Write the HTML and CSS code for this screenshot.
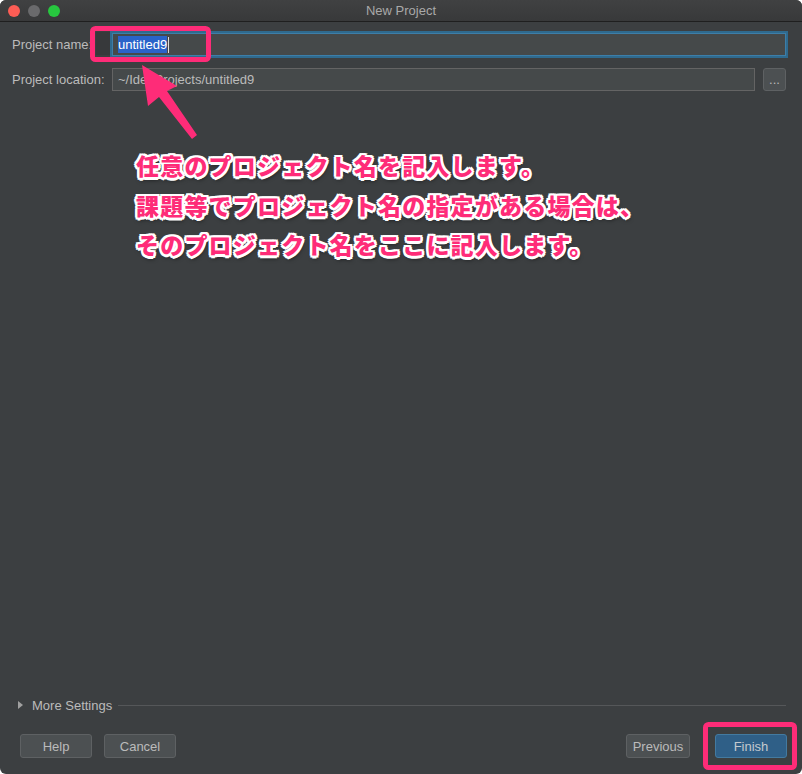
FILE: index.html
```html
<!DOCTYPE html>
<html lang="ja">
<head>
<meta charset="utf-8">
<title>New Project</title>
<link rel="stylesheet" href="styles.css">
</head>
<body>
<div class="window">
  <div class="titlebar">
    <div class="lights">
      <span class="light red"></span>
      <span class="light gray"></span>
      <span class="light green"></span>
    </div>
    <div class="title">New Project</div>
  </div>
  <div class="content">
    <div class="form">
      <label class="label">Project name:</label>
      <div class="field focused"><span class="sel">untitled9</span><span class="caret"></span></div>
      <label class="label">Project location:</label>
      <div class="loc-row">
        <div class="field">~/IdeaProjects/untitled9</div>
        <button class="browse">...</button>
      </div>
    </div>
    <div class="spacer"></div>
    <div class="more">
      <span class="tri"></span>
      <span class="more-text">More Settings</span>
      <span class="rule"></span>
    </div>
    <div class="buttons">
      <div class="group left">
        <button class="btn">Help</button>
        <button class="btn">Cancel</button>
      </div>
      <div class="group right">
        <button class="btn prev">Previous</button>
        <button class="btn primary">Finish</button>
      </div>
    </div>
  </div>
  <svg class="overlay" width="802" height="774" viewBox="0 0 802 774">
    <rect x="96" y="32" width="14" height="23" fill="#37393b"/>
    <rect x="92.5" y="28.5" width="116" height="31" rx="3" fill="none" stroke="#fe2c78" stroke-width="5"/>
    <rect x="705.5" y="724.5" width="89" height="43" rx="3" fill="none" stroke="#fe2c78" stroke-width="5"/>
    <polygon points="142,65 177,86 167,91 197,135 192,139 159,97 148,106" fill="#fe2c78"/>
  </svg>
  <div class="note">
    <p>任意のプロジェクト名を記入します。</p>
    <p>課題等でプロジェクト名の指定がある場合は、</p>
    <p>そのプロジェクト名をここに記入します。</p>
  </div>
</div>
</body>
</html>
```

FILE: styles.css
```css
* { box-sizing: border-box; }
html, body {
  margin: 0;
  padding: 0;
  background: #ffffff;
}
body {
  font-family: "Liberation Sans", Arial, sans-serif;
  font-size: 13px;
  color: #bbbbbb;
}
.window {
  position: relative;
  width: 802px;
  height: 774px;
  background: #3c3f41;
  border-radius: 6px;
  overflow: hidden;
  display: flex;
  flex-direction: column;
}
.titlebar {
  position: relative;
  height: 22px;
  flex: none;
  background: linear-gradient(#404142, #38393a);
  border-bottom: 1px solid #1f1f1f;
  display: flex;
  align-items: center;
}
.lights {
  display: flex;
  gap: 8px;
  padding-left: 8px;
}
.light {
  width: 12px;
  height: 12px;
  border-radius: 50%;
  display: block;
}
.red { background: #fd5d55; }
.gray { background: #6a6a6c; }
.green { background: #27c73f; }
.title {
  position: absolute;
  left: 0;
  right: 0;
  text-align: center;
  color: #a9a9a9;
  font-size: 13px;
  line-height: 22px;
}
.content {
  flex: 1;
  display: flex;
  flex-direction: column;
  padding: 11px 16px 16px 12px;
}
.form {
  display: grid;
  grid-template-columns: 100px 1fr;
  row-gap: 12px;
  align-items: center;
}
.label {
  font-size: 13px;
  color: #bbbbbb;
  white-space: nowrap;
}
.field {
  height: 23px;
  background: #45494a;
  border: 1px solid #646464;
  display: flex;
  align-items: center;
  padding-left: 5px;
  color: #bbbbbb;
  font-size: 13px;
}
.field.focused {
  border: 1px solid #3d7ea8;
  box-shadow: 0 0 0 2px #2f6a8e;
}
.sel {
  background: #2a63c9;
  color: #ffffff;
  line-height: 17px;
}
.caret {
  width: 1px;
  height: 16px;
  background: #dddddd;
  margin-left: 1px;
}
.loc-row {
  display: flex;
  gap: 8px;
}
.loc-row .field { flex: 1; }
.browse {
  width: 23px;
  height: 23px;
  border: 1px solid #5e6163;
  border-radius: 3px;
  background: #4c5052;
  color: #bbbbbb;
  font: 13px "Liberation Sans", Arial, sans-serif;
  padding: 0;
  line-height: 18px;
}
.spacer { flex: 1; }
.more {
  display: flex;
  align-items: center;
  height: 16px;
  padding-left: 6px;
  margin-bottom: 21px;
}
.tri {
  width: 0;
  height: 0;
  border-left: 5px solid #a0a0a0;
  border-top: 4px solid transparent;
  border-bottom: 4px solid transparent;
  margin-right: 9px;
}
.more-text {
  color: #bbbbbb;
  font-size: 13px;
  margin-right: 6px;
}
.rule {
  flex: 1;
  height: 1px;
  background: #555759;
}
.buttons {
  display: flex;
  justify-content: space-between;
  padding-left: 8px;
  margin-right: -1px;
}
.group {
  display: flex;
  gap: 12px;
}
.group.right { gap: 25px; }
.btn {
  height: 24px;
  min-width: 64px;
  padding: 0 10px;
  border: 1px solid #5e6163;
  border-radius: 3px;
  background: #4c5052;
  color: #bbbbbb;
  font: 13px "Liberation Sans", Arial, sans-serif;
}
.group.left .btn { width: 72px; padding: 0; }
.btn.prev { width: 64px; padding: 0; }
.btn.primary {
  background: #2f5f87;
  border-color: #437aa0;
  width: 72px;
  padding: 0;
  color: #c4c9ce;
}
.overlay {
  position: absolute;
  left: 0;
  top: 0;
  pointer-events: none;
}
.note {
  position: absolute;
  left: 136px;
  top: 146px;
  font-family: "Noto Sans CJK JP", sans-serif;
  font-weight: 900;
  font-size: 23px;
  letter-spacing: 1.2px;
  line-height: 39.5px;
  color: #fe2c78;
  text-shadow:
    -2px -2px 0 #fff, 2px -2px 0 #fff, -2px 2px 0 #fff, 2px 2px 0 #fff,
    0 -2.5px 0 #fff, 0 2.5px 0 #fff, -2.5px 0 0 #fff, 2.5px 0 0 #fff,
    1px 3px 4px rgba(0,0,0,0.6);
}
.note p { margin: 0; white-space: nowrap; }
```
